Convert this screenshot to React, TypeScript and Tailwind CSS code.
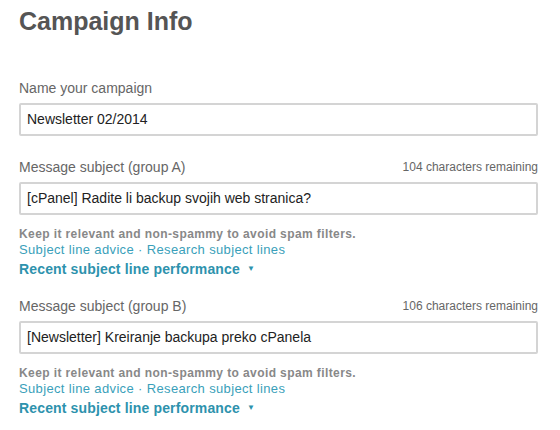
const font = { fontFamily: '"Liberation Sans", Arial, sans-serif' };

interface SubjectFieldProps {
  label: string;
  remaining: number;
  value: string;
  className?: string;
}

function SubjectField({ label, remaining, value, className }: SubjectFieldProps) {
  return (
    <div className={className}>
      <div className="flex items-end justify-between h-4">
        <span className="text-[14px] text-[#666] leading-4">{label}</span>
        <span className="text-[12px] text-[#666] leading-4">
          {remaining} characters remaining
        </span>
      </div>
      <div className="mt-[7px] h-[33px] border-2 border-[#d4d4d4] rounded-[2px] flex items-center px-[6px] text-[14px] text-[#222]">
        {value}
      </div>
      <div className="mt-[12px] text-[12px] font-bold text-[#888] leading-[15px] tracking-[0.4px]">
        Keep it relevant and non-spammy to avoid spam filters.
      </div>
      <div className="text-[13px] text-[#3a9fba] leading-[16px] tracking-[0.35px]">
        <span>Subject line advice</span>
        <span className="mx-[4px]">·</span>
        <span>Research subject lines</span>
      </div>
      <div className="flex items-center gap-[7px] text-[14px] font-bold text-[#2d92ad] leading-[22px] tracking-[0.15px]">
        <span>Recent subject line performance</span>
        <span className="text-[8px]">▼</span>
      </div>
    </div>
  );
}

export default function App() {
  return (
    <div className="w-[560px] h-[430px] bg-white overflow-hidden" style={font}>
      <div className="pl-[19px] pr-[22px]">
        <h1 className="text-[25px] font-bold text-[#555] leading-[28px] pt-[7px]">
          Campaign Info
        </h1>

        <div className="mt-[45px]">
          <div className="text-[14px] text-[#666] leading-4">Name your campaign</div>
          <div className="mt-[7px] h-[33px] border-2 border-[#d4d4d4] rounded-[2px] flex items-center px-[6px] text-[14px] text-[#222]">
            Newsletter 02/2014
          </div>
        </div>

        <SubjectField
          className="mt-[23px]"
          label="Message subject (group A)"
          remaining={104}
          value="[cPanel] Radite li backup svojih web stranica?"
        />
        <SubjectField
          className="mt-[18px]"
          label="Message subject (group B)"
          remaining={106}
          value="[Newsletter] Kreiranje backupa preko cPanela"
        />
      </div>
    </div>
  );
}
